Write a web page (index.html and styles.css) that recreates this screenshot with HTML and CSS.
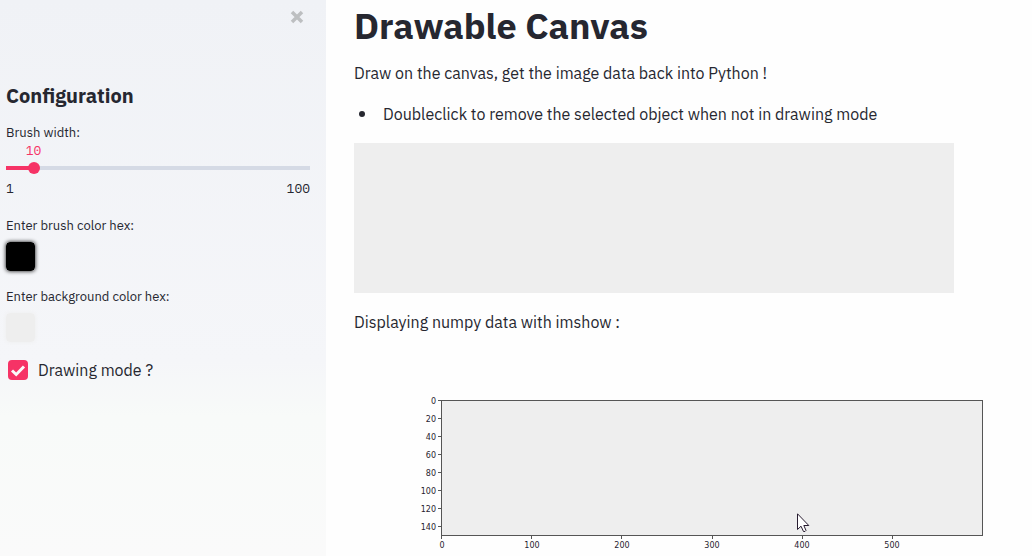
FILE: index.html
```html
<!DOCTYPE html>
<html lang="en">
<head>
<meta charset="utf-8">
<meta name="viewport" content="width=device-width, initial-scale=1">
<title>Drawable Canvas</title>
<link rel="stylesheet" href="styles.css">
</head>
<body>
<div class="app">
  <aside class="sidebar">
    <div class="sidebar-top">
      <button class="close" type="button" aria-label="Close sidebar">
        <svg class="close-icon" viewBox="0 0 14 14" aria-hidden="true"><path d="M2 2 12 12M12 2 2 12"/></svg>
      </button>
    </div>
    <h2 class="sidebar-title">Configuration</h2>
    <div class="field slider-field">
      <label class="label" for="brush-width">Brush width:</label>
      <div class="slider-value"><output class="value" for="brush-width" style="left: 9.09%">10</output></div>
      <input class="slider" id="brush-width" type="range" min="1" max="100" value="10">
      <div class="slider-range"><span>1</span><span>100</span></div>
    </div>
    <div class="field">
      <label class="label" for="brush-color">Enter brush color hex:</label>
      <input class="swatch swatch-dark" id="brush-color" type="color" value="#000000">
    </div>
    <div class="field">
      <label class="label" for="background-color">Enter background color hex:</label>
      <input class="swatch swatch-light" id="background-color" type="color" value="#eeeeee">
    </div>
    <label class="check"><input class="check-box" type="checkbox" checked><span>Drawing mode ?</span></label>
  </aside>
  <main class="main">
    <h1 class="title">Drawable Canvas</h1>
    <p class="text">Draw on the canvas, get the image data back into Python !</p>
    <ul class="list"><li class="item">Doubleclick to remove the selected object when not in drawing mode</li></ul>
    <canvas class="canvas" width="600" height="150"></canvas>
    <p class="text caption">Displaying numpy data with imshow :</p>
    <svg class="plot" viewBox="0 0 678 215" role="img" aria-label="Image data plot">
      <rect class="plot-area" x="87.5" y="60.5" width="541" height="135"/>
      <path class="ticks" d="M84 60.5h3M84 78.5h3M84 96.5h3M84 114.5h3M84 132.5h3M84 150.5h3M84 168.5h3M84 186.5h3M87.5 196v3M177.5 196v3M267.5 196v3M358.5 196v3M448.5 196v3M538.5 196v3"/>
      <g class="y-labels">
        <text x="82" y="64">0</text><text x="82" y="82">20</text><text x="82" y="100">40</text><text x="82" y="118">60</text>
        <text x="82" y="136">80</text><text x="82" y="154">100</text><text x="82" y="172">120</text><text x="82" y="190">140</text>
      </g>
      <g class="x-labels">
        <text x="88" y="208">0</text><text x="178" y="208">100</text><text x="268" y="208">200</text>
        <text x="358" y="208">300</text><text x="448" y="208">400</text><text x="538" y="208">500</text>
      </g>
    </svg>
  </main>
  <svg class="pointer" viewBox="0 0 13 20" aria-hidden="true"><path d="M.5 .8V16.5L4 13.2 6.5 18.5Q8.3 19 9 17.4L6.8 12.5H11.8Z"/></svg>
</div>
</body>
</html>
```

FILE: styles.css
```css
* { box-sizing: border-box; }

body {
  margin: 0;
  color: #262730;
  background: #fefefe;
  font: 16px/24px "IBM Plex Sans", Roboto, sans-serif;
}

h1, h2, p, ul { margin: 0; }

.app {
  position: relative;
  display: flex;
  min-height: 100vh;
  overflow: hidden;
}

.sidebar {
  flex: 0 0 326px;
  padding: 6px 16px 16px 6px;
  background: linear-gradient(#f0f2f6, #f5f6f9 65%, #f8faf9 75%, #fafafa);
}

.sidebar-top {
  display: flex;
  justify-content: flex-end;
  height: 76px;
}

.close {
  width: 26px;
  height: 22px;
  padding: 0;
  border: 0;
  background: none;
}

.close-icon {
  display: block;
  width: 14px;
  height: 14px;
  margin: 0 auto;
  fill: none;
  stroke: #bdbfc1;
  stroke-width: 3.5;
}

.sidebar-title {
  font-size: 20px;
  line-height: 28px;
  font-weight: 700;
}

.field {
  display: flex;
  flex-direction: column;
  align-items: flex-start;
  margin-bottom: 16px;
}

.slider-field {
  align-items: stretch;
  margin: 13px 0 17px;
}

.label {
  font-size: 13px;
  line-height: 20px;
}

.slider-value {
  position: relative;
  height: 17px;
}

.value {
  position: absolute;
  top: 0;
  transform: translateX(-50%);
  color: #f63366;
  font: 13px/16px "IBM Plex Mono", "Liberation Mono", monospace;
}

.slider {
  appearance: none;
  height: 12px;
  margin: 2px -6px;
  background:
    linear-gradient(#f63366, #f63366) 6px 4px / 30px 4px no-repeat,
    linear-gradient(#d5dae5, #d5dae5) 6px 4px / calc(100% - 12px) 4px no-repeat;
}

.slider::-webkit-slider-thumb {
  appearance: none;
  width: 12px;
  height: 12px;
  border-radius: 50%;
  background: #f63366;
}

.slider-range {
  display: flex;
  justify-content: space-between;
  margin-top: 3px;
  font: 13px/20px "IBM Plex Mono", "Liberation Mono", monospace;
}

.swatch {
  appearance: none;
  width: 29px;
  height: 29px;
  margin-top: 6px;
  padding: 0;
  border: 0;
  border-radius: 4px;
  background: none;
}

.swatch::-webkit-color-swatch-wrapper { padding: 0; }

.swatch::-webkit-color-swatch {
  border: 0;
  border-radius: 4px;
}

.swatch-dark { box-shadow: 0 0 4px #000; }

.swatch-light { box-shadow: 0 0 4px #eee; }

.check {
  display: flex;
  align-items: center;
  gap: 10px;
  padding-left: 2px;
}

.check-box {
  appearance: none;
  width: 20px;
  height: 20px;
  margin: 0;
  border-radius: 4px;
  background: #f63366 url("data:image/svg+xml,%3Csvg xmlns='http://www.w3.org/2000/svg' viewBox='0 0 20 20'%3E%3Cpath d='M4 10.5 8.2 14.5 16 6.5' fill='none' stroke='%23fafafa' stroke-width='3'/%3E%3C/svg%3E") center / 20px no-repeat;
}

.main {
  flex: 1;
  min-width: 0;
  padding-left: 28px;
}

.title {
  font-size: 36px;
  line-height: 52px;
  font-weight: 700;
}

.text { margin-top: 9px; }

.list {
  margin: 17px 0;
  padding-left: 5px;
  list-style: none;
}

.item {
  display: flex;
  align-items: center;
  gap: 18px;
}

.item::before {
  content: "";
  flex: none;
  width: 6px;
  height: 6px;
  border-radius: 50%;
  background: #262730;
}

.canvas {
  display: block;
  width: 600px;
  max-width: 100%;
  height: 150px;
  background: #eee;
}

.caption { margin: 17px 0 6px; }

.plot {
  display: block;
  width: 100%;
}

.plot-area {
  fill: #eee;
  stroke: #555;
}

.ticks { stroke: #555; }

.plot text {
  fill: #281c30;
  font: 8px "DejaVu Sans", sans-serif;
}

.y-labels { text-anchor: end; }

.x-labels { text-anchor: middle; }

.pointer {
  position: absolute;
  left: 797px;
  top: 513px;
  width: 13px;
  height: 20px;
  fill: #fff;
  stroke: #281c30;
}
```
